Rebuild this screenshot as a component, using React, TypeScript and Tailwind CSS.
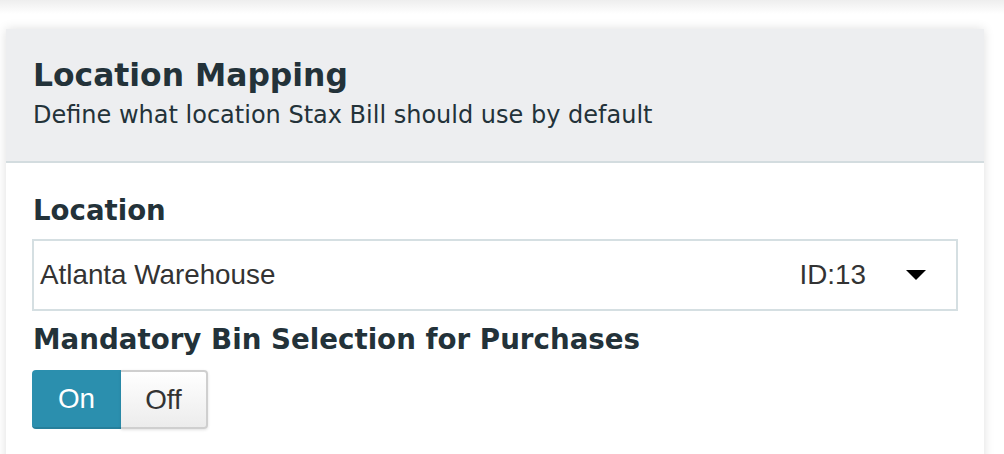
export default function App() {
  return (
    <div className="min-h-screen w-full bg-white font-['DejaVu_Sans',Verdana,sans-serif] text-[#233239]">
      <div className="h-[14px] w-full bg-gradient-to-b from-[#eeeeee] to-white" />

      <div className="mt-[15px] pl-[6px] pr-[20px]">
        <div className="bg-white shadow-[0_0_10px_rgba(0,0,0,0.13)]">
          <div className="border-b-2 border-[#d3dcdf] bg-[#edeef0] pb-[31px] pl-[27px] pt-[27px]">
            <h2 className="text-[31.4px] font-bold leading-[38px]">Location Mapping</h2>
            <p className="mt-[6px] text-[24px] leading-[30px]">
              Define what location Stax Bill should use by default
            </p>
          </div>

          <div className="px-[26px] pb-[40px] pt-[32px]">
            <label className="block pl-px text-[27.6px] font-bold leading-[32px]">Location</label>
            <div className="mt-[12px] flex h-[72px] items-center border-2 border-[#d5dfe2] pl-[6px] pr-[30px] font-['Liberation_Sans',Arial,sans-serif] text-[27.8px] text-[#333333]">
              <span className="flex-1">Atlanta Warehouse</span>
              <span>ID:13</span>
              <span className="ml-[40px] h-0 w-0 border-x-[10px] border-t-[10px] border-x-transparent border-t-black" />
            </div>

            <label className="mt-[13px] block pl-px text-[27.7px] font-bold leading-[32px]">
              Mandatory Bin Selection for Purchases
            </label>
            <div className="mt-[14px] flex h-[59px] w-[176px] font-['Liberation_Sans',Arial,sans-serif] text-[27.8px]">
              <button className="flex w-[89px] items-center justify-center rounded-l-[4px] border-b-2 border-[#267f9b] bg-[#2b8fae] text-white">
                On
              </button>
              <button className="flex flex-1 items-center justify-center rounded-r-[4px] border-2 border-l-0 border-[#cfcfcf] bg-gradient-to-b from-white to-[#ececec] text-[#333333] shadow-[0_1px_3px_rgba(0,0,0,0.12)]">
                Off
              </button>
            </div>
          </div>
        </div>
      </div>
    </div>
  );
}
